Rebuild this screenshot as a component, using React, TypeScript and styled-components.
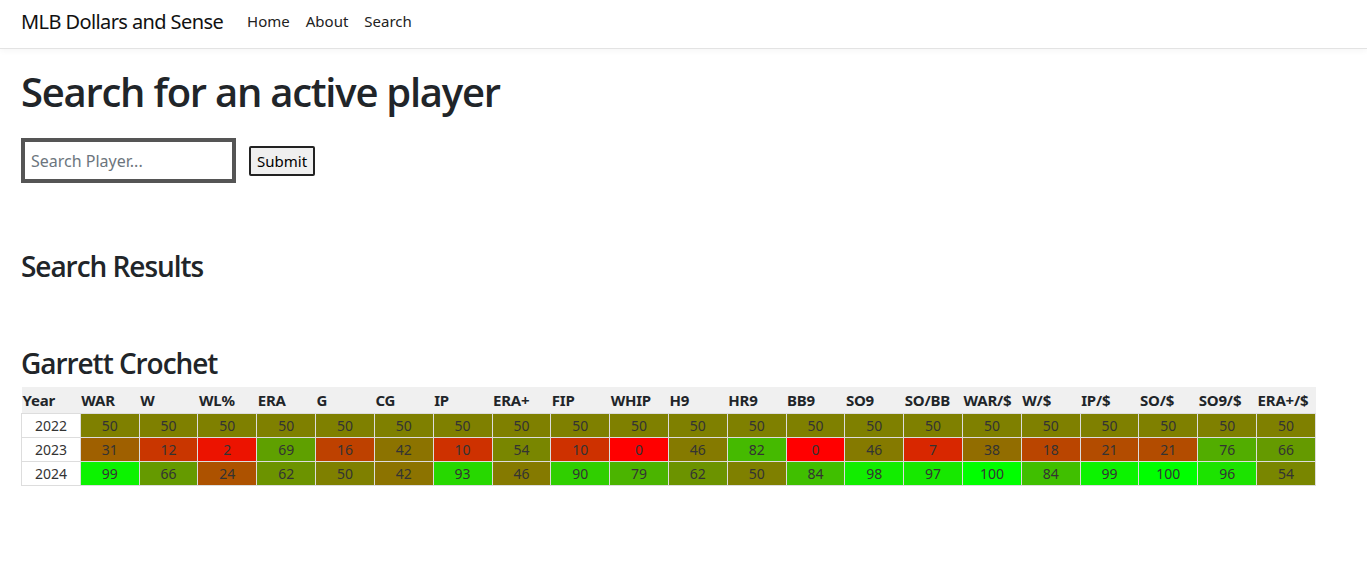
import React from 'react';
import styled, { createGlobalStyle } from 'styled-components';

const GlobalStyle = createGlobalStyle`
  body {
    margin: 0;
    font-family: "Noto Sans", "Open Sans", sans-serif;
    color: #212529;
    background: #fff;
  }
`;

const Nav = styled.nav`
  height: 49px;
  display: flex;
  align-items: center;
  padding: 0 21px 6px;
  border-bottom: 1px solid #e3e3e3;
  box-shadow: 0 2px 6px rgba(0, 0, 0, 0.04);
  box-sizing: border-box;
`;

const Brand = styled.a`
  font-size: 20px;
  letter-spacing: -0.6px;
  color: #111;
  text-decoration: none;
  margin-right: 24px;
`;

const NavLink = styled.a`
  font-size: 15px;
  color: #222;
  text-decoration: none;
  margin-right: 16px;
`;

const Main = styled.main`
  padding: 0 21px;
`;

const Title = styled.h1`
  font-family: "Open Sans", "Noto Sans", sans-serif;
  font-size: 40px;
  font-weight: 600;
  letter-spacing: -1.25px;
  line-height: 1.2;
  margin: 19px 0 22px;
`;

const SearchForm = styled.form`
  display: flex;
  align-items: center;
  gap: 13px;
`;

const SearchInput = styled.input`
  width: 215px;
  height: 45px;
  box-sizing: border-box;
  border: 4px solid #555;
  padding: 0 6px;
  font-family: inherit;
  font-size: 16px;
  &::placeholder {
    color: #6c757d;
  }
`;

const SubmitButton = styled.button`
  height: 30px;
  padding: 0 6px;
  font-family: inherit;
  font-size: 15px;
  color: #000;
  background: #efefef;
  border: 2px solid #222;
  border-radius: 2px;
`;

const Heading = styled.h2<{ $top: number; $bottom: number }>`
  font-family: "Open Sans", "Noto Sans", sans-serif;
  font-size: 28px;
  font-weight: 600;
  letter-spacing: -1.05px;
  line-height: 1.2;
  margin: ${(p) => p.$top}px 0 ${(p) => p.$bottom}px;
`;

const Table = styled.table`
  border-collapse: collapse;
  table-layout: fixed;
  width: 1295px;
  font-size: 14px;
`;

const HeadCell = styled.th`
  background: #f0f0f0;
  text-align: left;
  font-weight: 700;
  font-size: 15px;
  height: 26px;
  padding: 0 1px;
  white-space: nowrap;
  letter-spacing: -0.2px;
`;

const Cell = styled.td<{ $bg?: string }>`
  background: ${(p) => p.$bg || '#fff'};
  border: 1px solid #ddd;
  text-align: center;
  height: 23px;
  padding: 0;
  color: #333;
`;

const cols = ['WAR', 'W', 'WL%', 'ERA', 'G', 'CG', 'IP', 'ERA+', 'FIP', 'WHIP', 'H9', 'HR9', 'BB9', 'SO9', 'SO/BB', 'WAR/$', 'W/$', 'IP/$', 'SO/$', 'SO9/$', 'ERA+/$'];

const rows: { year: number; vals: number[] }[] = [
  { year: 2022, vals: Array(21).fill(50) },
  { year: 2023, vals: [31, 12, 2, 69, 16, 42, 10, 54, 10, 0, 46, 82, 0, 46, 7, 38, 18, 21, 21, 76, 66] },
  { year: 2024, vals: [99, 66, 24, 62, 50, 42, 93, 46, 90, 79, 62, 50, 84, 98, 97, 100, 84, 99, 100, 96, 54] },
];

// red at 0, olive at 50, green at 100 (eased towards the middle)
const shade = (v: number) => {
  let g: number;
  if (v <= 50) g = 128 * Math.pow(v / 50, 0.6);
  else g = 255 - 127 * Math.pow((100 - v) / 50, 0.6);
  g = Math.round(g);
  return `rgb(${255 - g}, ${g}, 0)`;
};

export default function App() {
  return (
    <>
      <GlobalStyle />
      <Nav>
        <Brand href="#">MLB Dollars and Sense</Brand>
        <NavLink href="#">Home</NavLink>
        <NavLink href="#">About</NavLink>
        <NavLink href="#">Search</NavLink>
      </Nav>
      <Main>
        <Title>Search for an active player</Title>
        <SearchForm onSubmit={(e) => e.preventDefault()}>
          <SearchInput placeholder="Search Player..." />
          <SubmitButton type="submit">Submit</SubmitButton>
        </SearchForm>
        <Heading $top={67} $bottom={63}>Search Results</Heading>
        <Heading $top={0} $bottom={7}>Garrett Crochet</Heading>
        <Table>
          <thead>
            <tr>
              <HeadCell>Year</HeadCell>
              {cols.map((c) => (
                <HeadCell key={c}>{c}</HeadCell>
              ))}
            </tr>
          </thead>
          <tbody>
            {rows.map((r) => (
              <tr key={r.year}>
                <Cell>{r.year}</Cell>
                {r.vals.map((v, i) => (
                  <Cell key={i} $bg={shade(v)}>{v}</Cell>
                ))}
              </tr>
            ))}
          </tbody>
        </Table>
      </Main>
    </>
  );
}
